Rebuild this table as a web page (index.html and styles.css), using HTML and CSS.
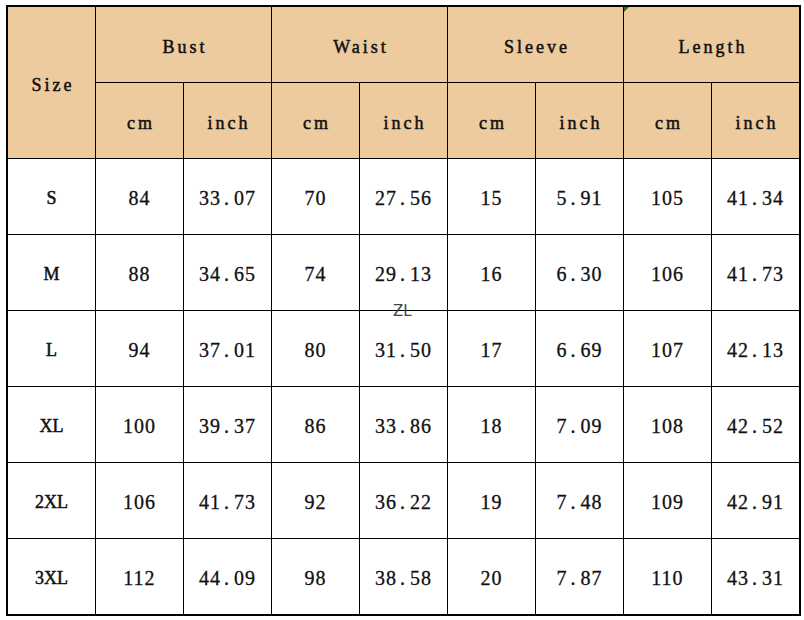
FILE: index.html
```html
<!DOCTYPE html>
<html>
<head>
<meta charset="utf-8">
<link rel="stylesheet" href="styles.css">
</head>
<body>
<div class="sheet">
  <div class="grid">
    <div class="cell head size">Size</div>
    <div class="cell head group">Bust</div>
    <div class="cell head group">Waist</div>
    <div class="cell head group">Sleeve</div>
    <div class="cell head group mark">Length</div>
    <div class="cell head">cm</div><div class="cell head">inch</div>
    <div class="cell head">cm</div><div class="cell head">inch</div>
    <div class="cell head">cm</div><div class="cell head">inch</div>
    <div class="cell head">cm</div><div class="cell head">inch</div>

    <div class="cell lbl">S</div><div class="cell">84</div><div class="cell">33<span class="pt">.</span>07</div><div class="cell">70</div><div class="cell">27<span class="pt">.</span>56</div><div class="cell">15</div><div class="cell">5<span class="pt">.</span>91</div><div class="cell">105</div><div class="cell">41<span class="pt">.</span>34</div>
    <div class="cell lbl">M</div><div class="cell">88</div><div class="cell">34<span class="pt">.</span>65</div><div class="cell">74</div><div class="cell">29<span class="pt">.</span>13</div><div class="cell">16</div><div class="cell">6<span class="pt">.</span>30</div><div class="cell">106</div><div class="cell">41<span class="pt">.</span>73</div>
    <div class="cell lbl">L</div><div class="cell">94</div><div class="cell">37<span class="pt">.</span>01</div><div class="cell">80</div><div class="cell">31<span class="pt">.</span>50</div><div class="cell">17</div><div class="cell">6<span class="pt">.</span>69</div><div class="cell">107</div><div class="cell">42<span class="pt">.</span>13</div>
    <div class="cell lbl">XL</div><div class="cell">100</div><div class="cell">39<span class="pt">.</span>37</div><div class="cell">86</div><div class="cell">33<span class="pt">.</span>86</div><div class="cell">18</div><div class="cell">7<span class="pt">.</span>09</div><div class="cell">108</div><div class="cell">42<span class="pt">.</span>52</div>
    <div class="cell lbl">2XL</div><div class="cell">106</div><div class="cell">41<span class="pt">.</span>73</div><div class="cell">92</div><div class="cell">36<span class="pt">.</span>22</div><div class="cell">19</div><div class="cell">7<span class="pt">.</span>48</div><div class="cell">109</div><div class="cell">42<span class="pt">.</span>91</div>
    <div class="cell lbl">3XL</div><div class="cell">112</div><div class="cell">44<span class="pt">.</span>09</div><div class="cell">98</div><div class="cell">38<span class="pt">.</span>58</div><div class="cell">20</div><div class="cell">7<span class="pt">.</span>87</div><div class="cell">110</div><div class="cell">43<span class="pt">.</span>31</div>
  </div>
  <div class="wm">ZL</div>
</div>
</body>
</html>
```

FILE: styles.css
```css
html, body {
  margin: 0;
  padding: 0;
  background: #ffffff;
}
.sheet {
  position: relative;
  width: 804px;
  height: 620px;
  padding: 5px 0 0 6px;
  box-sizing: border-box;
}
.grid {
  display: grid;
  grid-template-columns: repeat(9, 87px);
  grid-template-rows: repeat(8, 75px);
  gap: 1px;
  padding: 2px;
  background: #000;
  width: max-content;
}
.cell {
  background: #ffffff;
  display: flex;
  align-items: center;
  justify-content: center;
  padding-top: 4px;
  box-sizing: border-box;
  font-family: "Liberation Serif", "Times New Roman", serif;
  font-size: 20px;
  letter-spacing: 1px;
  color: #111;
  -webkit-text-stroke: 0.3px #111;
}
.pt {
  margin: 0 4px 0 3px;
}
.head {
  background: #eecb9e;
  font-size: 18px;
  letter-spacing: 3px;
  padding-top: 6px;
  padding-left: 3px;
  -webkit-text-stroke: 0.5px #111;
}
.size {
  grid-row: span 2;
}
.group {
  grid-column: span 2;
}
.lbl {
  font-size: 18px;
  letter-spacing: 0;
  -webkit-text-stroke: 0.5px #111;
}
.mark {
  position: relative;
}
.mark::before {
  content: "";
  position: absolute;
  left: 0;
  top: 0;
  border-top: 5px solid #2e6b1f;
  border-right: 5px solid transparent;
}
.wm {
  position: absolute;
  left: 393px;
  top: 302px;
  font-family: "DejaVu Sans", sans-serif;
  font-size: 15px;
  color: #444;
}
```
